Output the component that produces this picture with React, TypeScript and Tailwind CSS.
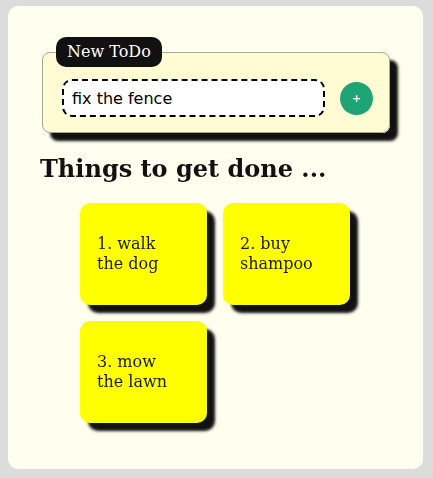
import { useState } from "react";

const notes = ["walk the dog", "buy shampoo", "mow the lawn"];

const App = () => {
  const [text, setText] = useState("fix the fence");

  return (
    <div className="min-h-screen bg-[#dcdcdc] pl-2 pt-[6px]">
      <div className="w-[415px] h-[463px] rounded-[10px] bg-[#fffff0] px-8 pt-[31px]">
        {/* New todo form */}
        <fieldset className="ml-[2px] w-[348px] rounded-[8px] border border-[#a9a894] bg-[#fffbd2] pl-[13px] pr-[16px] pt-[12px] pb-[15px] shadow-[8px_8px_3px_#111]">
          <legend className="rounded-[10px] bg-[#111] px-[11px] py-[5px] text-[16px] leading-[20px] text-white font-['DejaVu_Serif',serif]">
            New ToDo
          </legend>
          <div className="flex items-center gap-[15px] pl-[6px]">
            <input
              autoFocus
              value={text}
              onChange={(e) => setText(e.target.value)}
              className="h-[38px] w-[263px] rounded-[10px] border-2 border-dashed border-black bg-white px-2 text-[16px] text-black caret-black outline-none font-['DejaVu_Sans',sans-serif]"
            />
            <button className="flex h-[33px] w-[33px] items-center justify-center rounded-full bg-[#1fa476] text-[11px] font-bold leading-none text-white font-['DejaVu_Sans',sans-serif]">
              +
            </button>
          </div>
        </fieldset>

        <h2 className="mt-[22px] text-[24px] font-bold leading-[28px] text-[#111] font-['DejaVu_Serif',serif]">
          Things to get done ...
        </h2>

        {/* Notes */}
        <div className="mt-[20px] ml-10 grid grid-cols-[127px_127px] gap-x-4 gap-y-4">
          {notes.map((n, i) => (
            <div
              key={n}
              className="h-[102px] rounded-[10px] bg-[#ffff00] pl-[17px] pt-[31px] shadow-[8px_8px_3px_#111]"
            >
              <p className="w-20 text-[16px] leading-[20px] text-[#1a1a1a] font-['DejaVu_Serif',serif]">
                {i + 1}. {n}
              </p>
            </div>
          ))}
        </div>
      </div>
    </div>
  );
};

export default App;
